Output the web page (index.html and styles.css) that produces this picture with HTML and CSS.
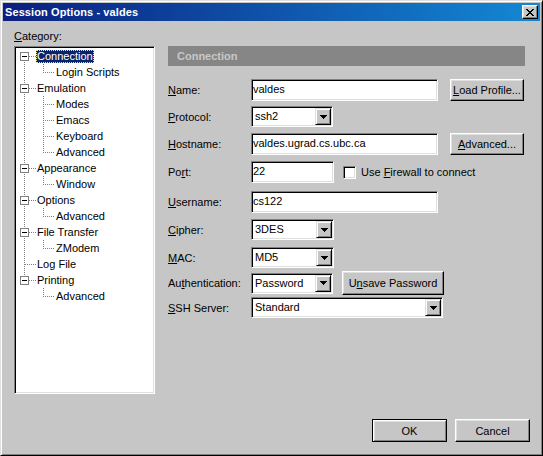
FILE: index.html
```html
<!DOCTYPE html>
<html>
<head>
<meta charset="utf-8">
<link rel="stylesheet" href="styles.css">
</head>
<body>
<div class="window">
  <div class="titlebar">
    <span class="title">Session Options - valdes</span>
    <button class="close"><svg width="8" height="7" viewBox="0 0 8 7" shape-rendering="crispEdges"><path fill="#000" d="M0 0h2v1h-2z M6 0h2v1h-2z M1 1h2v1h-2z M5 1h2v1h-2z M2 2h4v1h-4z M3 3h2v1h-2z M2 4h4v1h-4z M1 5h2v1h-2z M5 5h2v1h-2z M0 6h2v1h-2z M6 6h2v1h-2z"/></svg></button>
  </div>
  <div class="main">
    <div class="cat-label"><u>C</u>ategory:</div>
    <div class="tree">
      <div class="node"><span class="ia root-first"><i class="box"></i></span><span class="tl sel">Connection</span></div>
      <div class="node"><span class="ia pass"></span><span class="ib last"></span><span class="tl">Login Scripts</span></div>
      <div class="node"><span class="ia root-mid"><i class="box"></i></span><span class="tl">Emulation</span></div>
      <div class="node"><span class="ia pass"></span><span class="ib mid"></span><span class="tl">Modes</span></div>
      <div class="node"><span class="ia pass"></span><span class="ib mid"></span><span class="tl">Emacs</span></div>
      <div class="node"><span class="ia pass"></span><span class="ib mid"></span><span class="tl">Keyboard</span></div>
      <div class="node"><span class="ia pass"></span><span class="ib last"></span><span class="tl">Advanced</span></div>
      <div class="node"><span class="ia root-mid"><i class="box"></i></span><span class="tl">Appearance</span></div>
      <div class="node"><span class="ia pass"></span><span class="ib last"></span><span class="tl">Window</span></div>
      <div class="node"><span class="ia root-mid"><i class="box"></i></span><span class="tl">Options</span></div>
      <div class="node"><span class="ia pass"></span><span class="ib last"></span><span class="tl">Advanced</span></div>
      <div class="node"><span class="ia root-mid"><i class="box"></i></span><span class="tl">File Transfer</span></div>
      <div class="node"><span class="ia pass"></span><span class="ib last"></span><span class="tl">ZModem</span></div>
      <div class="node"><span class="ia leaf-mid"></span><span class="tl">Log File</span></div>
      <div class="node"><span class="ia root-last"><i class="box"></i></span><span class="tl">Printing</span></div>
      <div class="node"><span class="ia"></span><span class="ib last"></span><span class="tl">Advanced</span></div>
    </div>
    <div class="panel">
      <div class="hdr">Connection</div>
      <div class="row r-name">
        <span class="lab"><u>N</u>ame:</span>
        <div class="field w-wide">valdes</div>
        <button class="btn side"><u>L</u>oad Profile...</button>
      </div>
      <div class="row r-proto">
        <span class="lab"><u>P</u>rotocol:</span>
        <div class="combo w-combo"><span class="val">ssh2</span><span class="arrow"><svg width="7" height="4" viewBox="0 0 7 4" shape-rendering="crispEdges"><path d="M0 0h7v1h-7z M1 1h5v1h-5z M2 2h3v1h-3z M3 3h1v1h-1z"/></svg></span></div>
      </div>
      <div class="row r-host">
        <span class="lab"><u>H</u>ostname:</span>
        <div class="field w-wide">valdes.ugrad.cs.ubc.ca</div>
        <button class="btn side"><u>A</u>dvanced...</button>
      </div>
      <div class="row r-port">
        <span class="lab">Po<u>r</u>t:</span>
        <div class="field w-port">22</div>
        <span class="check"></span>
        <span class="check-lab">Use <u>F</u>irewall to connect</span>
      </div>
      <div class="row r-user">
        <span class="lab"><u>U</u>sername:</span>
        <div class="field w-wide">cs122</div>
      </div>
      <div class="row r-cipher">
        <span class="lab"><u>C</u>ipher:</span>
        <div class="combo w-combo2"><span class="val">3DES</span><span class="arrow"><svg width="7" height="4" viewBox="0 0 7 4" shape-rendering="crispEdges"><path d="M0 0h7v1h-7z M1 1h5v1h-5z M2 2h3v1h-3z M3 3h1v1h-1z"/></svg></span></div>
      </div>
      <div class="row r-mac">
        <span class="lab"><u>M</u>AC:</span>
        <div class="combo w-combo2"><span class="val">MD5</span><span class="arrow"><svg width="7" height="4" viewBox="0 0 7 4" shape-rendering="crispEdges"><path d="M0 0h7v1h-7z M1 1h5v1h-5z M2 2h3v1h-3z M3 3h1v1h-1z"/></svg></span></div>
      </div>
      <div class="row r-auth">
        <span class="lab">Au<u>t</u>hentication:</span>
        <div class="combo w-combo"><span class="val">Password</span><span class="arrow"><svg width="7" height="4" viewBox="0 0 7 4" shape-rendering="crispEdges"><path d="M0 0h7v1h-7z M1 1h5v1h-5z M2 2h3v1h-3z M3 3h1v1h-1z"/></svg></span></div>
        <button class="btn unsave">U<u>n</u>save Password</button>
      </div>
      <div class="row r-ssh">
        <span class="lab"><u>S</u>SH Server:</span>
        <div class="combo w-ssh"><span class="val">Standard</span><span class="arrow"><svg width="7" height="4" viewBox="0 0 7 4" shape-rendering="crispEdges"><path d="M0 0h7v1h-7z M1 1h5v1h-5z M2 2h3v1h-3z M3 3h1v1h-1z"/></svg></span></div>
      </div>
    </div>
  </div>
  <div class="footer">
    <button class="btn foot default">OK</button>
    <button class="btn foot">Cancel</button>
  </div>
</div>
</body>
</html>
```
FILE: styles.css
```css
* { box-sizing: border-box; }
html, body { margin: 0; padding: 0; }
body {
  width: 543px;
  height: 456px;
  overflow: hidden;
  font-family: "Liberation Sans", Arial, sans-serif;
  font-size: 11px;
  color: #000;
  background: #c6c6c6;
}
.window {
  width: 543px;
  height: 456px;
  background: #c6c6c6;
  border: 1px solid;
  border-color: #dfdfdf #000 #000 #dfdfdf;
  box-shadow: inset 1px 1px #fff, inset -1px -1px #808080;
  padding: 2px;
}
.titlebar {
  height: 18px;
  display: flex;
  align-items: center;
  justify-content: space-between;
  padding: 0 2px 0 2px;
  background: linear-gradient(to right, #0a1f80, #1488d4);
  color: #fff;
  font-weight: bold;
  font-size: 11px;
}
.title { letter-spacing: 0.1px; }
.close {
  width: 16px;
  height: 14px;
  padding: 0;
  margin: 0;
  display: flex;
  align-items: center;
  justify-content: center;
  background: #c6c6c6;
  border: 1px solid;
  border-color: #fff #000 #000 #fff;
  box-shadow: inset -1px -1px #808080, inset 1px 1px #dfdfdf;
}
.close svg { display: block; margin-top: 0; }

.main {
  display: grid;
  grid-template-columns: 141px 357px;
  grid-template-rows: 16px 348px;
  column-gap: 13px;
  padding: 9px 0 0 11px;
}
.cat-label {
  grid-column: 1;
  grid-row: 1;
  line-height: 13px;
}
.tree {
  grid-column: 1;
  grid-row: 2;
  background: #fff;
  border: 1px solid;
  border-color: #808080 #fff #fff #808080;
  box-shadow: inset 1px 1px #000, inset -1px -1px #dfdfdf;
  padding: 1px;
}
.node {
  height: 16px;
  display: flex;
  align-items: flex-start;
}
.ia, .ib {
  flex: none;
  height: 16px;
  display: flex;
  align-items: center;
  background-repeat: no-repeat;
}
.ia { width: 20px; padding-left: 4px; }
.ib { width: 19px; }

.root-first {
  background-image:
    repeating-linear-gradient(to right, #808080 0 1px, transparent 1px 2px),
    repeating-linear-gradient(to bottom, #808080 0 1px, transparent 1px 2px);
  background-position: 13px 8px, 8px 8px;
  background-size: 7px 1px, 1px 8px;
}
.root-mid {
  background-image:
    repeating-linear-gradient(to right, #808080 0 1px, transparent 1px 2px),
    repeating-linear-gradient(to bottom, #808080 0 1px, transparent 1px 2px);
  background-position: 13px 8px, 8px 0;
  background-size: 7px 1px, 1px 16px;
}
.root-last {
  background-image:
    repeating-linear-gradient(to right, #808080 0 1px, transparent 1px 2px),
    repeating-linear-gradient(to bottom, #808080 0 1px, transparent 1px 2px);
  background-position: 13px 8px, 8px 0;
  background-size: 7px 1px, 1px 9px;
}
.leaf-mid {
  background-image:
    repeating-linear-gradient(to right, #808080 0 1px, transparent 1px 2px),
    repeating-linear-gradient(to bottom, #808080 0 1px, transparent 1px 2px);
  background-position: 9px 8px, 8px 0;
  background-size: 11px 1px, 1px 16px;
}
.pass {
  background-image: repeating-linear-gradient(to bottom, #808080 0 1px, transparent 1px 2px);
  background-position: 8px 0;
  background-size: 1px 16px;
}
.ib.mid {
  background-image:
    repeating-linear-gradient(to right, #808080 0 1px, transparent 1px 2px),
    repeating-linear-gradient(to bottom, #808080 0 1px, transparent 1px 2px);
  background-position: 9px 8px, 7px 0;
  background-size: 9px 1px, 1px 16px;
}
.ib.last {
  background-image:
    repeating-linear-gradient(to right, #808080 0 1px, transparent 1px 2px),
    repeating-linear-gradient(to bottom, #808080 0 1px, transparent 1px 2px);
  background-position: 9px 8px, 7px 0;
  background-size: 9px 1px, 1px 9px;
}
.box {
  display: block;
  width: 9px;
  height: 9px;
  border: 1px solid #808080;
  background: linear-gradient(#000, #000) center / 5px 1px no-repeat, #fff;
}
.tl {
  margin-top: 2px;
  line-height: 13px;
  height: 13px;
  padding: 0 1px;
  white-space: nowrap;
}
.tl.sel {
  background: #0a246a;
  color: #fff;
  outline: 1px dotted #e6e68c;
  outline-offset: -1px;
}

.panel {
  grid-column: 2;
  grid-row: 2;
}
.hdr {
  height: 20px;
  line-height: 20px;
  background: #868686;
  color: #c8c8c8;
  font-weight: bold;
  padding-left: 9px;
}
.row {
  display: flex;
  align-items: center;
}
.r-name { margin-top: 13px; }
.r-proto { margin-top: 5px; }
.r-host { margin-top: 6px; }
.r-port { margin-top: 6px; }
.r-user { margin-top: 8px; }
.r-cipher { margin-top: 6px; }
.r-mac { margin-top: 7px; }
.r-auth { margin-top: 3px; }
.r-ssh { margin-top: 2px; }

.lab {
  width: 83px;
  flex: none;
  white-space: nowrap;
}
.field {
  flex: none;
  height: 22px;
  line-height: 18px;
  padding-left: 1px;
  background: #fff;
  border: 1px solid;
  border-color: #808080 #fff #fff #808080;
  box-shadow: inset 1px 1px #000, inset -1px -1px #dfdfdf;
  white-space: nowrap;
}
.w-wide { width: 187px; }
.w-port { width: 83px; }
.w-combo { width: 82px; }
.w-combo2 { width: 83px; }
.w-ssh { width: 192px; }

.combo {
  flex: none;
  height: 21px;
  display: flex;
  align-items: stretch;
  background: #fff;
  border: 1px solid;
  border-color: #808080 #fff #fff #808080;
  box-shadow: inset 1px 1px #000, inset -1px -1px #dfdfdf;
  padding: 1px;
}
.combo .val {
  flex: 1;
  padding-left: 2px;
  line-height: 17px;
  white-space: nowrap;
}
.combo .arrow {
  flex: none;
  width: 16px;
  height: 17px;
  display: flex;
  align-items: center;
  justify-content: center;
  background: #c6c6c6;
  border: 1px solid;
  border-color: #dfdfdf #000 #000 #dfdfdf;
  box-shadow: inset 1px 1px #fff, inset -1px -1px #808080;
}
.combo .arrow svg { display: block; }

.check {
  flex: none;
  width: 13px;
  height: 13px;
  margin-left: 9px;
  background: #fff;
  border: 1px solid;
  border-color: #808080 #fff #fff #808080;
  box-shadow: inset 1px 1px #000, inset -1px -1px #dfdfdf;
}
.check-lab {
  margin-left: 5px;
  white-space: nowrap;
}

.btn {
  flex: none;
  font-family: "Liberation Sans", Arial, sans-serif;
  font-size: 11px;
  color: #000;
  padding: 0;
  margin: 0;
  text-align: center;
  background: #c6c6c6;
  border: 1px solid;
  border-color: #fff #000 #000 #fff;
  box-shadow: inset -1px -1px #808080, inset 1px 1px #dfdfdf;
  white-space: nowrap;
}
.side {
  width: 74px;
  height: 22px;
  margin-left: 12px;
}
.unsave {
  width: 102px;
  height: 24px;
  margin-left: 9px;
}
.footer {
  display: flex;
  justify-content: flex-end;
  gap: 8px;
  margin-top: 25px;
  padding-right: 10px;
}
.foot {
  width: 75px;
  height: 23px;
}
.default {
  border-color: #000;
  box-shadow: inset 1px 1px #fff, inset -1px -1px #808080, inset 2px 2px #dfdfdf;
}
```
